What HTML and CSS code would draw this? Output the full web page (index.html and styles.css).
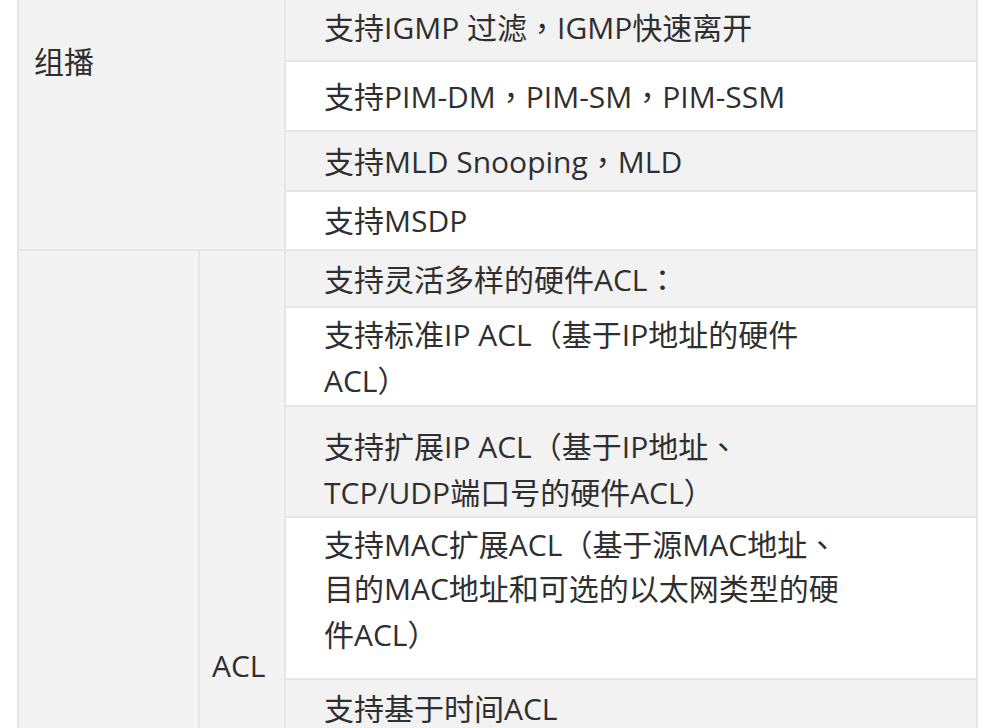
FILE: index.html
```html
<!DOCTYPE html>
<html lang="zh-CN">
<head>
    <meta charset="UTF-8">
    <meta name="viewport" content="width=device-width, initial-scale=1.0">
    <title>产品规格</title>
    <link rel="stylesheet" href="styles.css">
</head>
<body>

<div class="page">
    <table class="spec">
        <colgroup>
            <col class="col-cat">
            <col class="col-sub">
            <col>
        </colgroup>
        <tr class="r1">
            <td class="cat" colspan="2" rowspan="4">组播</td>
            <td class="item">支持IGMP 过滤<span class="pu" lang="zh-TW">，</span>IGMP快速离开</td>
        </tr>
        <tr class="r2">
            <td class="item">支持PIM-DM<span class="pu" lang="zh-TW">，</span>PIM-SM<span class="pu" lang="zh-TW">，</span>PIM-SSM</td>
        </tr>
        <tr class="r3">
            <td class="item">支持MLD Snooping<span class="pu" lang="zh-TW">，</span>MLD</td>
        </tr>
        <tr class="r4">
            <td class="item">支持MSDP</td>
        </tr>
        <tr class="r5">
            <td class="cat" rowspan="5"></td>
            <td class="sub" rowspan="5">ACL</td>
            <td class="item">支持灵活多样的硬件ACL<span class="pu" lang="zh-TW">：</span></td>
        </tr>
        <tr class="r6">
            <td class="item">支持标准IP ACL<span class="pu" lang="zh-TW">（</span>基于IP地址的硬件<br>ACL<span class="pu" lang="zh-TW">）</span></td>
        </tr>
        <tr class="r7">
            <td class="item">支持扩展IP ACL<span class="pu" lang="zh-TW">（</span>基于IP地址<span class="pu" lang="zh-TW">、</span><br>TCP/UDP端口号的硬件ACL<span class="pu" lang="zh-TW">）</span></td>
        </tr>
        <tr class="r8">
            <td class="item">支持MAC扩展ACL<span class="pu" lang="zh-TW">（</span>基于源MAC地址<span class="pu" lang="zh-TW">、</span><br>目的MAC地址和可选的以太网类型的硬<br>件ACL<span class="pu" lang="zh-TW">）</span></td>
        </tr>
        <tr class="r9">
            <td class="item">支持基于时间ACL</td>
        </tr>
    </table>
</div>

</body>
</html>
```

FILE: styles.css
```css
body {
    margin: 0;
    background: #fff;
    font-family: "Open Sans", "Noto Sans CJK SC", sans-serif;
    color: #2f2f2f;
    overflow: hidden;
}
.page {
    margin-top: -4px;
    padding-left: 17px;
}
.spec {
    border-collapse: collapse;
    table-layout: fixed;
    width: 961px;
    font-size: 30px;
    line-height: 44px;
}
.col-cat {
    width: 181px;
}
.col-sub {
    width: 86px;
}
.spec td {
    border: 2px solid #e6e6e6;
    vertical-align: middle;
}
.cat {
    background: #f3f3f3;
    vertical-align: top !important;
    padding: 42px 15px 0;
}
.sub {
    background: #f3f3f3;
    vertical-align: top !important;
    padding: 393px 12px 0;
}
.item {
    padding: 0 20px 0 38px;
    background: #fff;
    white-space: nowrap;
}
.spec tr:nth-child(odd) .item {
    background: #f2f2f2;
}
/* full-width punctuation sits centred in its box */
.pu {
    font-family: "Noto Sans CJK TC", sans-serif;
}
.r1 { height: 64px; }
.r2 { height: 70px; }
.r3 { height: 60px; }
.r4 { height: 59px; }
.r5 { height: 57px; }
.r6 { height: 99px; }
.r7 { height: 111px; }
.r8 { height: 162px; }
.r9 { height: 60px; }
.r1 .item {
    padding-bottom: 5px;
}
.r7 .item {
    padding-top: 14px;
}
.r8 .item {
    padding-bottom: 18px;
}
```
